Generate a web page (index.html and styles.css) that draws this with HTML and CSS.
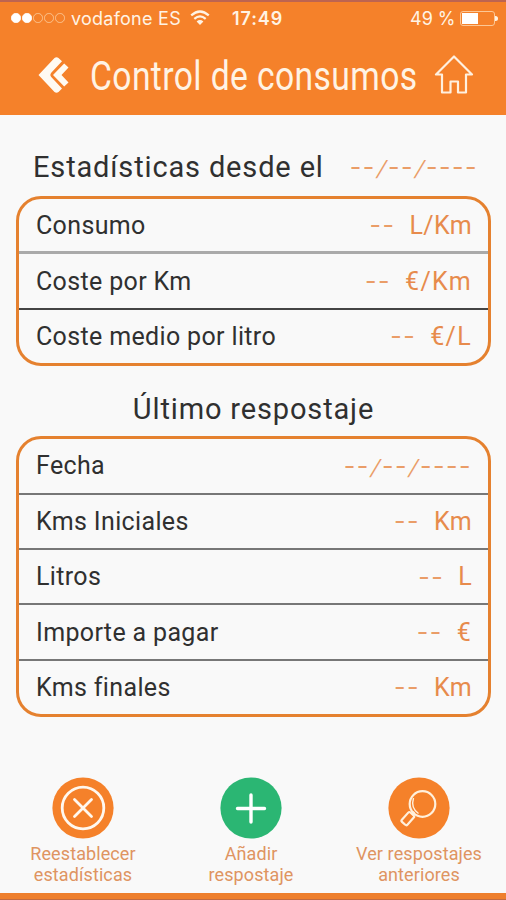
FILE: index.html
```html
<!DOCTYPE html>
<html lang="es">
<head>
    <meta charset="UTF-8">
    <meta name="viewport" content="width=device-width, initial-scale=1.0">
    <title>Control de consumos</title>
    <link rel="stylesheet" href="styles.css">
</head>
<body>
    <header class="header">
        <!-- Barra de estado -->
        <div class="status">
            <div class="signal"><i class="on"></i><i class="on"></i><i></i><i></i><i></i></div>
            <span class="carrier">vodafone ES</span>
            <svg class="wifi" width="20" height="16" viewBox="0 0 20 16" fill="none" stroke="#fff3e4" stroke-width="2.2">
                <path d="M1.2 5.4Q10-2.4 18.8 5.4M4.3 8.9Q10 4 15.7 8.9"/>
                <path d="M6.6 11.4Q10 8.6 13.4 11.4L10 15Z" fill="#fff3e4" stroke="none"/>
            </svg>
            <span class="time">17:49</span>
            <span class="percent">49 %</span>
            <div class="battery"><div class="level"></div></div>
        </div>
        <div class="nav">
            <svg class="back" width="32" height="38" viewBox="0 0 32 38" fill="#fffaf2">
                <path d="M.5 19L16.500 2Q18.500 .3 20.500 2L24 5.200L13 17Q11.500 19 13 20.800L24 32.500L20.500 36Q18.500 37.500 16.500 36Z"/>
                <path d="M15 19L26.200 7.500L30.500 11.500L23.500 19L30.500 26.500L26.200 30.500Z"/>
            </svg>
            <div class="title-box"><h1>Control de consumos</h1></div>
            <svg class="home" width="40" height="40" viewBox="0 0 40 40" fill="none" stroke="#fff0df" stroke-width="2.2" stroke-linejoin="round">
                <path d="M20 1.500L2 19.500H8V37.500H16.500V26.500H24V37.500H32V19.500H38Z"/>
            </svg>
        </div>
    </header>

    <main class="content">
        <h2 class="since"><span>Estadísticas desde el</span><span class="date">--<i>/</i>--<i>/</i>----</span></h2>
        <div class="card">
            <div class="row thick"><span>Consumo</span><div class="value"><b>--</b><span>L/Km</span></div></div>
            <div class="row dark"><span>Coste por Km</span><div class="value wide"><b>--</b><span>€/Km</span></div></div>
            <div class="row"><span>Coste medio por litro</span><div class="value wide"><b>--</b><span>€/L</span></div></div>
        </div>

        <h2 class="last">Último respostaje</h2>
        <div class="card">
            <div class="row"><span>Fecha</span><div class="value"><span class="date">--<i>/</i>--<i>/</i>----</span></div></div>
            <div class="row"><span>Kms Iniciales</span><div class="value"><b>--</b><span>Km</span></div></div>
            <div class="row"><span>Litros</span><div class="value"><b>--</b><span>L</span></div></div>
            <div class="row"><span>Importe a pagar</span><div class="value wide"><b>--</b><span>€</span></div></div>
            <div class="row"><span>Kms finales</span><div class="value"><b>--</b><span>Km</span></div></div>
        </div>
    </main>

    <!-- Acciones -->
    <footer class="actions">
        <div class="action">
            <svg width="62" height="62" viewBox="0 0 62 62" fill="none" stroke="#fff8ef" stroke-linecap="round">
                <circle cx="31" cy="31" r="30.600" fill="#f5812a" stroke="none"/>
                <circle cx="31" cy="31" r="20.800" stroke-width="2.800"/>
                <path d="M22.500 22.500L39.500 39.500M39.500 22.500L22.500 39.500" stroke-width="2.800"/>
            </svg>
            <p>Reestablecer<br>estadísticas</p>
        </div>
        <div class="action">
            <svg width="62" height="62" viewBox="0 0 62 62" fill="none" stroke="#fff" stroke-linecap="round">
                <circle cx="31" cy="31" r="30.600" fill="#2bb673" stroke="none"/>
                <path d="M17.500 31.500H44.500M31 18V45" stroke-width="3.400"/>
            </svg>
            <p>Añadir<br>respostaje</p>
        </div>
        <div class="action">
            <svg width="62" height="62" viewBox="0 0 62 62" fill="none" stroke="#fff0dc">
                <circle cx="31" cy="31" r="30.600" fill="#f5812a" stroke="none"/>
                <circle cx="34.500" cy="27" r="12.800" stroke-width="2.200"/>
                <path d="M25.500 21Q22.500 31 30.500 36.500" stroke-width="1.400"/>
                <rect x="-3.700" y="0" width="7.400" height="12.500" rx="1.500" stroke-width="2.200" transform="translate(24 37) rotate(42)"/>
                <path d="M24 37.500L26.500 35" stroke-width="2.500"/>
            </svg>
            <p>Ver respostajes<br>anteriores</p>
        </div>
    </footer>
    <div class="bottom-bar"></div>
</body>
</html>
```

FILE: styles.css
```css
* {
    box-sizing: border-box;
}
body {
    margin: 0;
    height: 900px;
    display: flex;
    flex-direction: column;
    overflow: hidden;
    background-color: #f9f9f9;
    color: #303030;
    font-family: Roboto, 'Liberation Sans', sans-serif;
}
h1, h2, p {
    margin: 0;
    font-weight: normal;
}

.header {
    height: 115px;
    flex: none;
    background-color: #f5812a;
    border-top: 2px solid #bd6450;
    color: #fff3e4;
}
.status {
    display: flex;
    align-items: center;
    height: 32px;
    padding-left: 11px;
    font-family: Inter, sans-serif;
    font-size: 18px;
    white-space: nowrap;
}
.signal {
    display: flex;
    gap: 1.5px;
    width: 60px;
}
.signal i {
    width: 9.5px;
    height: 9.5px;
    border: 1px solid #fbc28c;
    border-radius: 50%;
}
.signal .on {
    background-color: #fff;
    border-color: #fff;
}
.carrier {
    width: 119px;
    letter-spacing: 0.25px;
}
.wifi {
    flex: none;
}
.time {
    width: 178px;
    margin-left: 22px;
    font-weight: 600;
    letter-spacing: 0.9px;
}
.percent {
    width: 50px;
}
.battery {
    position: relative;
    width: 35px;
    height: 15px;
    padding: 1px;
    border: 1px solid #fcc795;
    border-radius: 3px;
}
.battery::after {
    content: "";
    position: absolute;
    right: -4px;
    top: 4px;
    width: 3px;
    height: 5px;
    background-color: #fff3e4;
    border-radius: 0 3px 3px 0;
}
.level {
    width: 16px;
    height: 11px;
    background-color: #fff;
}

.nav {
    display: flex;
    align-items: center;
    height: 81px;
    padding-left: 38px;
}
.title-box {
    width: 344px;
    margin-left: 20px;
    padding-top: 3px;
}
h1 {
    width: 344px;
    font-size: 41px;
    line-height: 50px;
    letter-spacing: 0.5px;
    white-space: nowrap;
    transform: scaleX(0.82);
    transform-origin: left;
}

.content {
    padding: 31px 15px 0 16px;
}
h2 {
    height: 50px;
    font-size: 29px;
    line-height: 42px;
    white-space: nowrap;
}
.since {
    display: flex;
    justify-content: space-between;
    padding: 0 13px 0 17px;
    letter-spacing: 0.85px;
}
.last {
    height: 70px;
    padding-top: 22px;
    text-align: center;
    letter-spacing: 0.85px;
}
/* Guiones de los valores sin datos */
.date, .value b {
    font-family: Inter, sans-serif;
    font-size: 25px;
    font-weight: 400;
    letter-spacing: 1.5px;
    color: #ea9d68;
}
.date i {
    display: inline-block;
    padding: 0 1px 0 2px;
    font-size: 21px;
    font-style: normal;
    transform: skewX(-18deg);
}
.card {
    border: 3px solid #e5812f;
    border-radius: 25px;
    overflow: hidden;
}
.row {
    display: flex;
    justify-content: space-between;
    align-items: center;
    height: 55.4px;
    padding: 0 16px 0 17px;
    border-bottom: 2px solid #777;
    font-size: 25px;
    letter-spacing: 0.35px;
    white-space: nowrap;
}
.row.thick {
    border-bottom: 3px solid #aaa;
}
.row.dark {
    border-bottom-color: #444;
}
.row:last-child {
    height: 53.4px;
    border-bottom: none;
}
.value {
    display: flex;
    align-items: center;
    gap: 14px;
    color: #e78b4c;
}
.value.wide {
    letter-spacing: 1.3px;
}

.actions {
    display: flex;
    justify-content: space-between;
    margin-top: auto;
    height: 116px;
    padding: 0 17px 0 13px;
}
.action {
    width: 140px;
    display: flex;
    flex-direction: column;
    align-items: center;
}
.action p {
    margin-top: 5px;
    font-size: 18px;
    line-height: 20.5px;
    letter-spacing: 0.1px;
    text-align: center;
    white-space: nowrap;
    color: #df9461;
}
.bottom-bar {
    height: 7px;
    flex: none;
    background-color: #ee7f2d;
    border-bottom: 1px solid #c36b40;
}
```
